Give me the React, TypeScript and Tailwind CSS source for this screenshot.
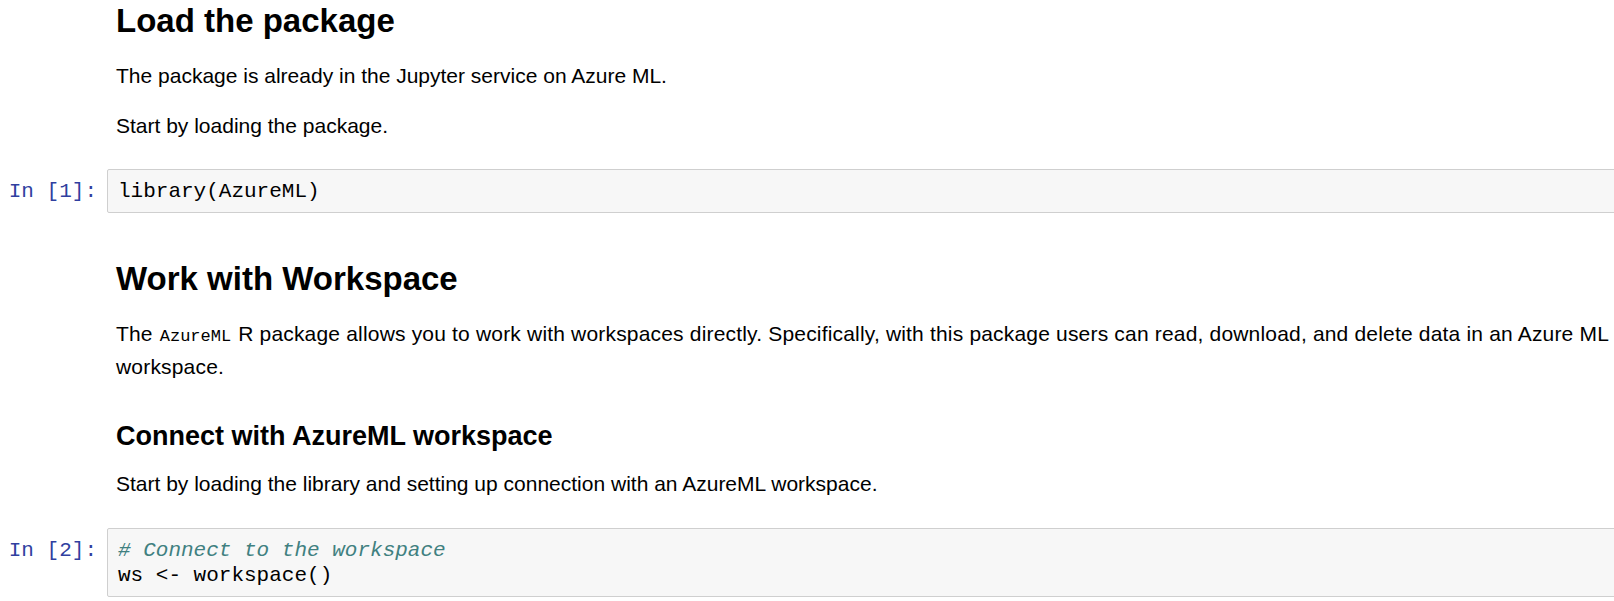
import React from 'react';

// notebook-ish page: markdown cells and two R code cells
const sans = { fontFamily: '"Liberation Sans", Arial, sans-serif' };
const mono = { fontFamily: '"Liberation Mono", "Courier New", monospace' };

function CodeCell({ n, lines }: { n: number; lines: React.ReactNode[] }) {
  return (
    <div className="flex items-start">
      <div
        className="w-[107px] shrink-0 pr-[10px] pt-[10px] text-right text-[21px] leading-[25px] text-[#303F9F]"
        style={mono}
      >
        In&nbsp;[{n}]:
      </div>
      <div
        className="flex-1 rounded-[2px] border border-[#cfcfcf] bg-[#f7f7f7] pl-[10px] pt-[9px] pb-[8px] text-[21px] leading-[25px] text-black"
        style={mono}
      >
        {lines.map((l, i) => (
          <div key={i} className="whitespace-pre">{l}</div>
        ))}
      </div>
    </div>
  );
}

export default function App() {
  return (
    <div className="min-h-screen w-full overflow-hidden bg-white text-black" style={sans}>
      {/* notebook container runs a bit past the window's right edge */}
      <div className="w-[1660px] pt-[3px]">
        <div className="ml-[116px] mr-[50px]">
          <h1 className="text-[33px] leading-[36px] font-bold">Load the package</h1>
          <p className="mt-[22px] text-[21px] leading-[30px]">The package is already in the Jupyter service on Azure ML.</p>
          <p className="mt-[20px] text-[21px] leading-[30px]">Start by loading the package.</p>
        </div>

        <div className="mt-[28px]">
          <CodeCell n={1} lines={['library(AzureML)']} />
        </div>

        <div className="ml-[116px] mr-[50px] mt-[48px]">
          <h1 className="text-[33px] leading-[36px] font-bold">Work with Workspace</h1>
          <p className="mt-[22px] text-[21px] leading-[30px] tracking-[0.18px]">
            The <code className="mx-[1px] text-[17px] tracking-normal" style={mono}>AzureML</code> R package allows you to work with workspaces directly. Specifically, with this package users can read, download, and delete data in an Azure ML workspace.
          </p>
          <h3 className="mt-[39px] text-[27px] leading-[30px] font-bold">Connect with AzureML workspace</h3>
          <p className="mt-[18px] text-[21px] leading-[30px]">Start by loading the library and setting up connection with an AzureML workspace.</p>
        </div>

        <div className="mt-[29px]">
          <CodeCell
            n={2}
            lines={[
              <span className="italic text-[#408080]"># Connect to the workspace</span>,
              'ws <- workspace()',
            ]}
          />
        </div>
      </div>
    </div>
  );
}
